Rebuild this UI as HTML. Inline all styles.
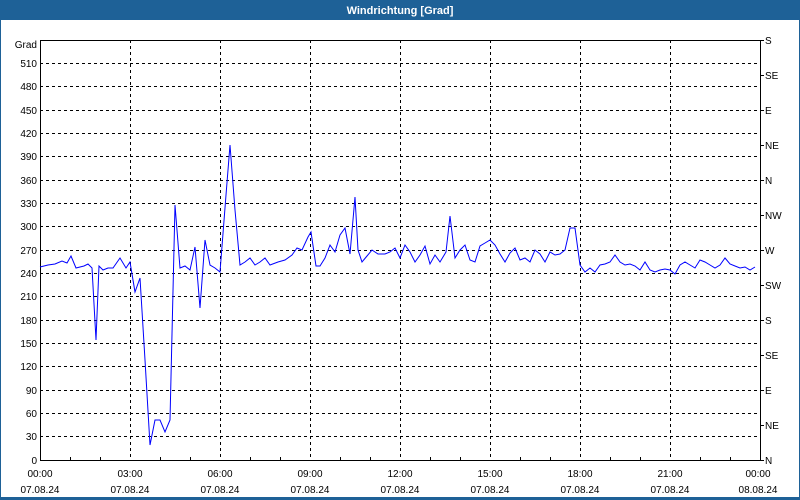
<!DOCTYPE html>
<html><head><meta charset="utf-8"><style>
body{margin:0;width:800px;height:500px;overflow:hidden;background:#fff;font-family:"Liberation Sans","DejaVu Sans",sans-serif}
</style></head><body>
<svg width="800" height="500" xmlns="http://www.w3.org/2000/svg" style="display:block">
<rect x="0" y="0" width="800" height="500" fill="#fff"/>
<rect x="0" y="0" width="800" height="20" fill="#1e6197"/>
<rect x="0" y="0" width="1" height="500" fill="#1e6197"/>
<rect x="799" y="0" width="1" height="500" fill="#1e6197"/>
<rect x="0" y="497" width="800" height="3" fill="#1e6197"/>
<text x="400" y="14" fill="#fff" font-size="11" font-weight="bold" text-anchor="middle">Windrichtung [Grad]</text>
<g stroke="#000" stroke-width="1" stroke-dasharray="3,3" fill="none" shape-rendering="crispEdges">
<path d="M40 63.5H760M40 86.5H760M40 110.5H760M40 133.5H760M40 156.5H760M40 180.5H760M40 203.5H760M40 226.5H760M40 250.5H760M40 273.5H760M40 296.5H760M40 320.5H760M40 343.5H760M40 366.5H760M40 390.5H760M40 413.5H760M40 436.5H760"/>
<path d="M130.5 40V460M220.5 40V460M310.5 40V460M400.5 40V460M490.5 40V460M580.5 40V460M670.5 40V460"/>
</g>
<g stroke="#000" stroke-width="1" fill="none" shape-rendering="crispEdges">
<rect x="40.5" y="40.5" width="720" height="420"/>
<path d="M70.5 460V457M100.5 460V457M160.5 460V457M190.5 460V457M250.5 460V457M280.5 460V457M340.5 460V457M370.5 460V457M430.5 460V457M460.5 460V457M520.5 460V457M550.5 460V457M610.5 460V457M640.5 460V457M700.5 460V457M730.5 460V457"/>
<path d="M760 40.5H764M760 75.5H764M760 110.5H764M760 145.5H764M760 180.5H764M760 215.5H764M760 250.5H764M760 285.5H764M760 320.5H764M760 355.5H764M760 390.5H764M760 425.5H764M760 460.5H764"/>
</g>
<g font-size="10" fill="#000" text-anchor="end">
<text x="37" y="48">Grad</text>
<text x="37" y="67">510</text><text x="37" y="90">480</text><text x="37" y="114">450</text><text x="37" y="137">420</text><text x="37" y="160">390</text><text x="37" y="184">360</text><text x="37" y="207">330</text><text x="37" y="230">300</text><text x="37" y="254">270</text><text x="37" y="277">240</text><text x="37" y="300">210</text><text x="37" y="324">180</text><text x="37" y="347">150</text><text x="37" y="370">120</text><text x="37" y="394">90</text><text x="37" y="417">60</text><text x="37" y="440">30</text><text x="37" y="464">0</text>
</g>
<g font-size="10" fill="#000">
<text x="765" y="44">S</text><text x="765" y="79">SE</text><text x="765" y="114">E</text><text x="765" y="149">NE</text><text x="765" y="184">N</text><text x="765" y="219">NW</text><text x="765" y="254">W</text><text x="765" y="289">SW</text><text x="765" y="324">S</text><text x="765" y="359">SE</text><text x="765" y="394">E</text><text x="765" y="429">NE</text><text x="765" y="464">N</text>
</g>
<g font-size="10" fill="#000" text-anchor="middle">
<text x="40" y="477">00:00</text><text x="130" y="477">03:00</text><text x="220" y="477">06:00</text><text x="310" y="477">09:00</text><text x="400" y="477">12:00</text><text x="490" y="477">15:00</text><text x="580" y="477">18:00</text><text x="670" y="477">21:00</text><text x="758" y="477">00:00</text>
<text x="40" y="493">07.08.24</text><text x="130" y="493">07.08.24</text><text x="220" y="493">07.08.24</text><text x="310" y="493">07.08.24</text><text x="400" y="493">07.08.24</text><text x="490" y="493">07.08.24</text><text x="580" y="493">07.08.24</text><text x="670" y="493">07.08.24</text><text x="758" y="493">08.08.24</text>
</g>
<polyline fill="none" stroke="#0000ff" stroke-width="1" points="40,267 48,265 55,264 62,261 67,263 71,256 76,268 84,266 88,264 92,268 96,340 99,266 103,270 108,268 113,268 120,258 126,268 130,262 135,292 140,278 145,360 150,445 155,420 160,420 165,432 170,420 175,205 180,268 185,266 190,270 195,247 200,308 205,240 210,265 215,268 220,272 226,195 230,145 235,210 240,265 245,262 250,258 255,265 260,262 265,258 270,265 278,262 285,260 292,255 297,248 302,250 308,237 311,232 316,266 320,266 325,258 330,245 335,252 340,235 345,228 350,254 355,197 358,250 362,262 367,256 372,250 378,254 385,254 390,252 395,248 400,258 405,245 410,252 415,262 420,255 425,246 430,264 435,255 440,262 446,252 450,216 455,258 460,250 465,245 470,260 475,262 480,246 485,243 490,240 495,245 500,254 505,262 510,253 515,248 520,260 525,258 530,262 535,250 540,254 545,262 550,252 555,255 560,254 565,250 570,228 575,228 580,265 585,272 590,268 595,272 600,265 605,264 610,262 615,255 620,262 625,265 630,264 635,266 640,270 645,262 650,270 655,272 660,270 665,269 670,270 675,274 680,265 685,262 690,265 695,268 700,260 705,262 710,265 715,268 720,265 725,258 730,264 735,266 740,268 745,267 750,270 755,267"/>
</svg>
</body></html>
